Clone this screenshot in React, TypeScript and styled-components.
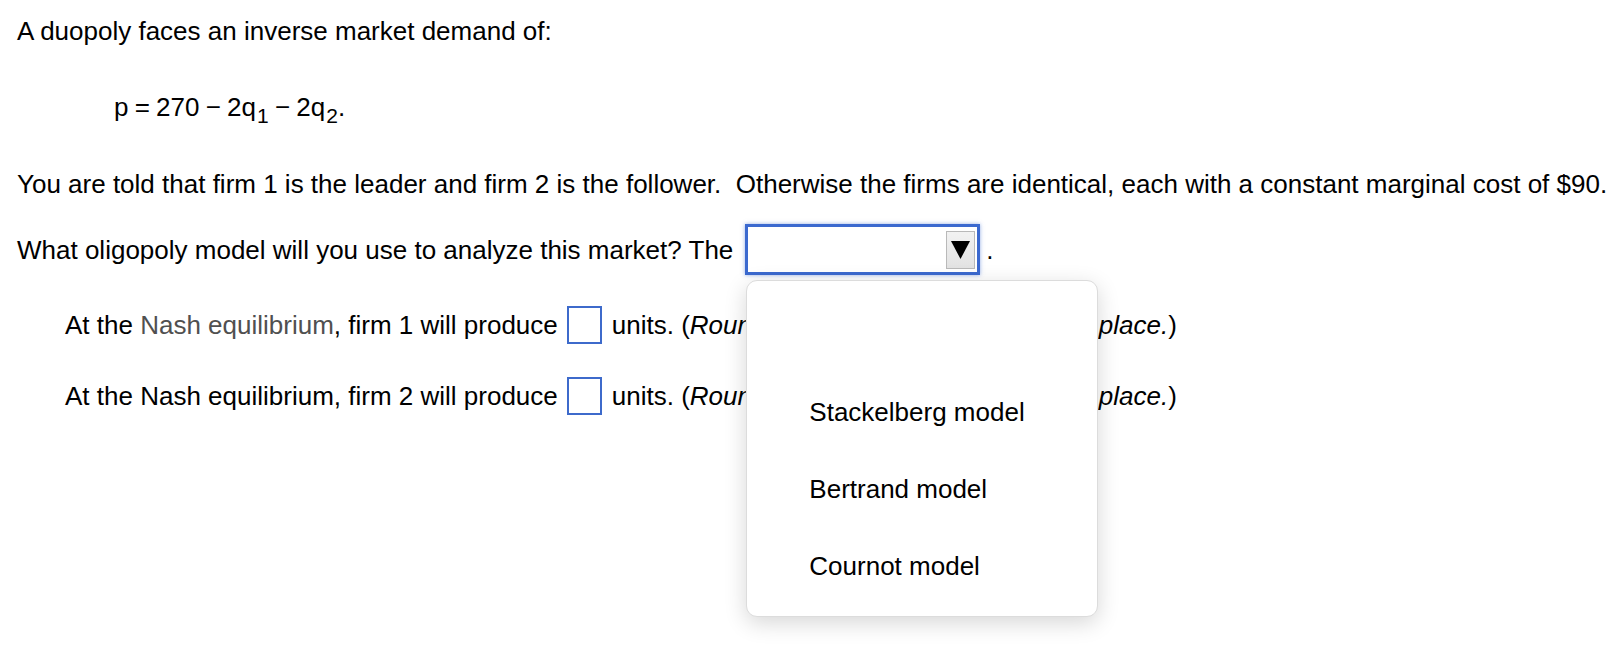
import styled, { createGlobalStyle } from 'styled-components';

const GlobalStyle = createGlobalStyle`
  html, body {
    margin: 0;
    padding: 0;
    background: #fff;
  }
  body {
    font-family: "Liberation Sans", Arial, Helvetica, sans-serif;
    font-size: 26px;
    color: #000;
  }
`;

const Page = styled.main`
  box-sizing: border-box;
  min-height: 648px;
  padding: 16px 0 0 17px;
`;

const Line = styled.p<{ $top: number }>`
  margin: ${(p) => p.$top}px 0 0;
  line-height: 30px;
  white-space: nowrap;
`;

const Equation = styled(Line)`
  padding-left: 97px;
  word-spacing: -1px;

  sub {
    font-size: 21px;
    line-height: 0;
    vertical-align: -7px;
    margin-left: 1px;
  }
`;

const Row = styled.div<{ $top: number; $indent?: number }>`
  display: flex;
  align-items: center;
  margin-top: ${(p) => p.$top}px;
  padding-left: ${(p) => p.$indent ?? 0}px;
  white-space: pre;
  line-height: 30px;
`;

const Gloss = styled.span`
  color: #505050;
`;

const Em = styled.i`
  font-style: italic;
`;

const SelectWrap = styled.div`
  position: relative;
  margin-left: 12px;
  margin-right: 6px;
`;

const SelectBox = styled.div`
  box-sizing: border-box;
  width: 235px;
  height: 51px;
  border: 3px solid #3b69cf;
  box-shadow: 0 0 4px rgba(59, 105, 207, 0.55);
  background: #fff;
  display: flex;
  justify-content: flex-end;
  align-items: center;
  padding-right: 2px;
`;

const ArrowButton = styled.span`
  box-sizing: border-box;
  width: 29px;
  height: 38px;
  border: 1px solid #b9b9b9;
  background: linear-gradient(#f2f2f2, #e2e2e2);
  display: flex;
  align-items: center;
  justify-content: center;
`;

const Popup = styled.ul`
  position: absolute;
  top: 56px;
  left: 1px;
  box-sizing: border-box;
  width: 352px;
  height: 337px;
  margin: 0;
  padding: 15px 0 14px;
  list-style: none;
  background: #fff;
  border: 1px solid #dcdcdc;
  border-radius: 11px;
  box-shadow: 0 6px 22px rgba(0, 0, 0, 0.16);
  z-index: 2;
`;

const Option = styled.li`
  height: 77px;
  display: flex;
  align-items: center;
  padding-left: 62px;
  font-size: 26px;
`;

const AnswerBox = styled.span`
  box-sizing: border-box;
  display: inline-block;
  width: 35px;
  height: 38px;
  border: 2px solid #3d6acb;
  margin: 0 10px 0 9px;
`;

function Triangle() {
  return (
    <svg width="19" height="19" viewBox="0 0 19 19">
      <polygon points="0,1 19,1 9.5,19" fill="#000" />
    </svg>
  );
}

function UnitsNote() {
  return (
    <span>
      units. (<Em>Round your answer to one decimal place.</Em>)
    </span>
  );
}

export default function App() {
  return (
    <>
      <GlobalStyle />
      <Page>
        <Line $top={0}>A duopoly faces an inverse market demand of:</Line>
        <Equation $top={46}>
          p = 270 − 2q<sub>1</sub> − 2q<sub>2</sub>.
        </Equation>
        <Line $top={47}>
          You are told that firm 1 is the leader and firm 2 is the follower.&nbsp; Otherwise the firms are
          identical, each with a constant marginal cost of $90.
        </Line>
        <Row $top={25}>
          <span>What oligopoly model will you use to analyze this market? The</span>
          <SelectWrap>
            <SelectBox>
              <ArrowButton>
                <Triangle />
              </ArrowButton>
            </SelectBox>
            <Popup>
              <Option />
              <Option>Stackelberg model</Option>
              <Option>Bertrand model</Option>
              <Option>Cournot model</Option>
            </Popup>
          </SelectWrap>
          <span>.</span>
        </Row>
        <Row $top={31} $indent={48}>
          <span>
            At the <Gloss>Nash equilibrium</Gloss>, firm 1 will produce
          </span>
          <AnswerBox />
          <UnitsNote />
        </Row>
        <Row $top={33} $indent={48}>
          <span>At the Nash equilibrium, firm 2 will produce</span>
          <AnswerBox />
          <UnitsNote />
        </Row>
      </Page>
    </>
  );
}
